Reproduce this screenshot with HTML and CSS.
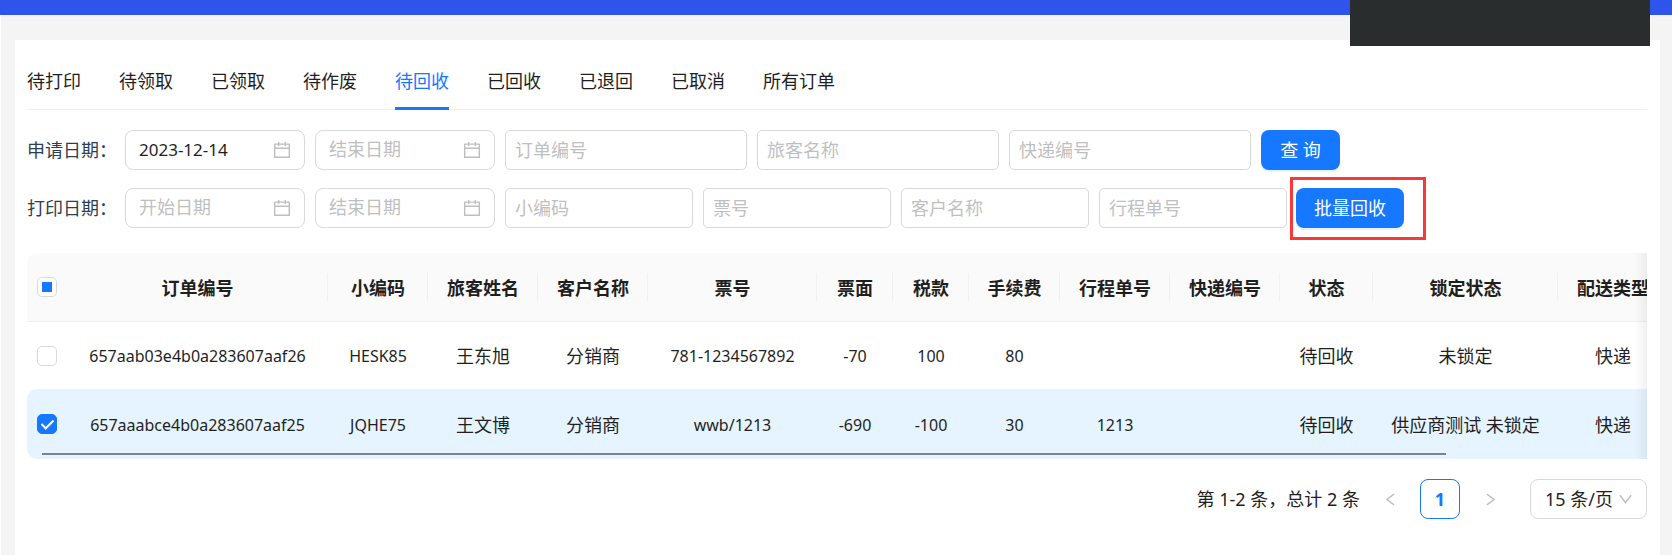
FILE: index.html
```html
<!DOCTYPE html>
<html lang="zh-CN">
<head>
<meta charset="utf-8">
<title>行程单订单</title>
<link rel="stylesheet" href="styles.css">
</head>
<body>
<svg class="sprite" aria-hidden="true">
  <symbol id="calendar" viewBox="64 64 896 896"><path d="M880 184H712v-64c0-4.400-3.600-8-8-8h-56c-4.400 0-8 3.600-8 8v64H384v-64c0-4.400-3.600-8-8-8h-56c-4.400 0-8 3.600-8 8v64H144c-17.700 0-32 14.300-32 32v664c0 17.700 14.300 32 32 32h736c17.700 0 32-14.300 32-32V216c0-17.700-14.300-32-32-32zm-40 656H184V460h656v380zM184 392V256h128v48c0 4.400 3.600 8 8 8h56c4.400 0 8-3.600 8-8v-48h256v48c0 4.400 3.600 8 8 8h56c4.400 0 8-3.600 8-8v-48h128v136H184z"/></symbol>
</svg>
<header class="topbar"><div class="topbar-panel"></div></header>
<main class="page">
  <section class="card">
    <nav class="tabs">
      <a class="tab" href="#">待打印</a>
      <a class="tab" href="#">待领取</a>
      <a class="tab" href="#">已领取</a>
      <a class="tab" href="#">待作废</a>
      <a class="tab tab-active" href="#" aria-current="page">待回收</a>
      <a class="tab" href="#">已回收</a>
      <a class="tab" href="#">已退回</a>
      <a class="tab" href="#">已取消</a>
      <a class="tab" href="#">所有订单</a>
    </nav>
    <form class="filters">
      <div class="filter-row">
        <label class="filter-label" for="apply-start">申请日期：</label>
        <div class="date"><input class="date-input" id="apply-start" type="text" placeholder="开始日期" value="2023-12-14"><svg class="icon"><use href="#calendar"/></svg></div>
        <div class="date"><input class="date-input" type="text" placeholder="结束日期" aria-label="申请结束日期"><svg class="icon"><use href="#calendar"/></svg></div>
        <input class="field field-wide" type="text" placeholder="订单编号" aria-label="订单编号">
        <input class="field field-wide" type="text" placeholder="旅客名称" aria-label="旅客名称">
        <input class="field field-wide" type="text" placeholder="快递编号" aria-label="快递编号">
        <button class="button" type="button">查 询</button>
      </div>
      <div class="filter-row">
        <label class="filter-label" for="print-start">打印日期：</label>
        <div class="date"><input class="date-input" id="print-start" type="text" placeholder="开始日期"><svg class="icon"><use href="#calendar"/></svg></div>
        <div class="date"><input class="date-input" type="text" placeholder="结束日期" aria-label="打印结束日期"><svg class="icon"><use href="#calendar"/></svg></div>
        <input class="field" type="text" placeholder="小编码" aria-label="小编码">
        <input class="field" type="text" placeholder="票号" aria-label="票号">
        <input class="field" type="text" placeholder="客户名称" aria-label="客户名称">
        <input class="field" type="text" placeholder="行程单号" aria-label="行程单号">
        <div class="marked"><button class="button" type="button">批量回收</button></div>
      </div>
    </form>
    <div class="table-box">
      <table class="orders">
        <colgroup>
          <col class="c-check"><col class="c-order"><col class="c-code"><col class="c-name"><col class="c-name"><col class="c-ticket"><col class="c-money"><col class="c-money"><col class="c-fee"><col class="c-name"><col class="c-name"><col class="c-state"><col class="c-lock"><col class="c-name">
        </colgroup>
        <thead>
          <tr>
            <th class="check-cell"><input class="check check-partial" type="checkbox" aria-label="全选"></th>
            <th>订单编号</th><th>小编码</th><th>旅客姓名</th><th>客户名称</th><th>票号</th><th>票面</th><th>税款</th><th>手续费</th><th>行程单号</th><th>快递编号</th><th>状态</th><th>锁定状态</th><th>配送类型</th>
          </tr>
        </thead>
        <tbody>
          <tr>
            <td class="check-cell"><input class="check" type="checkbox" aria-label="选择 HESK85"></td>
            <td class="latin">657aab03e4b0a283607aaf26</td><td class="latin">HESK85</td><td>王东旭</td><td>分销商</td><td class="latin">781-1234567892</td><td class="latin">-70</td><td class="latin">100</td><td class="latin">80</td><td></td><td></td><td>待回收</td><td>未锁定</td><td>快递</td>
          </tr>
          <tr class="selected">
            <td class="check-cell"><input class="check" type="checkbox" checked aria-label="选择 JQHE75"></td>
            <td class="latin">657aaabce4b0a283607aaf25</td><td class="latin">JQHE75</td><td>王文博</td><td>分销商</td><td class="latin">wwb/1213</td><td class="latin">-690</td><td class="latin">-100</td><td class="latin">30</td><td class="latin">1213</td><td></td><td>待回收</td><td>供应商测试 未锁定</td><td>快递</td>
          </tr>
        </tbody>
      </table>
      <div class="scroll-thumb"></div>
    </div>
    <footer class="pager">
      <span class="total">第 1-2 条，总计 2 条</span>
      <button class="page-button" type="button" disabled aria-label="上一页"><svg class="arrow" viewBox="0 0 10 14"><path d="M9 1 1 7l8 6"/></svg></button>
      <button class="page-button page-current" type="button">1</button>
      <button class="page-button" type="button" disabled aria-label="下一页"><svg class="arrow" viewBox="0 0 10 14"><path d="m1 1 8 6-8 6"/></svg></button>
      <div class="size"><select class="size-select" aria-label="每页条数"><option>15 条/页</option></select><svg class="size-arrow" viewBox="0 0 14 10"><path d="m1 1 6 8 6-8"/></svg></div>
    </footer>
  </section>
</main>
</body>
</html>
```
FILE: styles.css
```css
*, *::before, *::after { box-sizing: border-box; }
body {
  margin: 0;
  min-height: 100vh;
  display: flex;
  flex-direction: column;
  background: #f4f4f4;
  color: #1f1f1f;
  font: 18px/28px "Noto Sans", "Noto Sans CJK SC", sans-serif;
}
input, button, select { font: inherit; color: inherit; margin: 0; }
.sprite { position: absolute; width: 0; height: 0; }

.topbar { position: relative; height: 15px; background: #2f54eb; }
.topbar-panel {
  position: absolute;
  top: 0;
  right: 22px;
  width: 300px;
  height: 46px;
  background: #292d2e;
}
.page {
  flex: 1;
  display: flex;
  flex-direction: column;
  padding: 25px 12px 0 14px;
  border-left: 1px solid #fff;
}
.card { flex: 1; background: #fff; padding: 12px 13px 0 12px; overflow: hidden; }

.tabs { display: flex; gap: 38px; height: 58px; border-bottom: 1px solid #f0f0f0; }
.tab {
  height: 58px;
  padding-top: 15px;
  color: inherit;
  text-decoration: none;
  white-space: nowrap;
}
.tab-active { color: #1677ff; border-bottom: 3px solid #1677ff; }

.filters { display: flex; flex-direction: column; gap: 18px; padding-top: 20px; }
.filter-row { display: flex; gap: 10px; height: 40px; }
.filter-label { width: 88px; line-height: 40px; white-space: nowrap; color: #2c3e50; }
.date {
  display: flex;
  align-items: center;
  width: 180px;
  padding: 0 13px;
  border: 1px solid #d9d9d9;
  border-radius: 8px;
}
.date-input {
  flex: 1;
  min-width: 0;
  padding: 0;
  border: 0;
  outline: 0;
  background: none;
  font-size: 17px;
}
.date-input::placeholder { font-size: 18px; }
.icon { width: 18px; height: 18px; fill: #bfbfbf; }
.field {
  width: 188px;
  padding: 0 9px;
  border: 1px solid #d9d9d9;
  border-radius: 5px;
  outline: 0;
}
.field-wide { width: 242px; }
::placeholder { color: #bfbfbf; opacity: 1; }
.button {
  min-width: 79px;
  height: 40px;
  padding: 0 18px;
  border: 0;
  border-radius: 8px;
  background: #1677ff;
  color: #fff;
  box-shadow: 0 2px 0 rgba(5, 145, 255, 0.1);
  white-space: nowrap;
}
.marked {
  height: 63px;
  margin: -11px 0 0 -7px;
  padding: 8px 19px 0 3px;
  border: 3px solid #fb3838;
}

.table-box {
  position: relative;
  margin-top: 25px;
  overflow: hidden;
  border-radius: 10px 0 0 10px;
}
.table-box::after {
  content: "";
  position: absolute;
  inset: 0 0 0 auto;
  width: 12px;
  background: linear-gradient(to right, rgba(5, 5, 5, 0), rgba(5, 5, 5, 0.06));
}
.orders { width: 1641px; table-layout: fixed; border-collapse: separate; border-spacing: 0; }
.c-check { width: 40px; }
.c-order { width: 261px; }
.c-code { width: 100px; }
.c-name { width: 110px; }
.c-ticket { width: 169px; }
.c-money { width: 76px; }
.c-fee { width: 91px; }
.c-state { width: 93px; }
.c-lock { width: 185px; }
.orders th, .orders td { height: 67px; padding: 0; text-align: center; white-space: nowrap; }
.orders th {
  position: relative;
  height: 69px;
  padding-top: 2px;
  background: #fafafa;
  border-bottom: 1px solid #f0f0f0;
  font-weight: 700;
}
.orders th + th::after {
  content: "";
  position: absolute;
  top: 20px;
  right: 0;
  width: 1px;
  height: 28px;
  background: #f0f0f0;
}
.orders .latin { font-size: 16px; }
.orders td { padding-top: 1px; }
.orders .check-cell { padding: 0; }
.orders .selected td { height: 70px; background: #e6f4ff; }
.orders .selected td:first-child { border-radius: 10px 0 0 10px; }
.check {
  appearance: none;
  position: relative;
  display: block;
  width: 20px;
  height: 20px;
  margin: 0 auto;
  border: 1px solid #d9d9d9;
  border-radius: 5px;
  background: #fff;
}
.check-partial::after {
  content: "";
  position: absolute;
  inset: 4px;
  background: #1677ff;
}
.check:checked { border-color: #1677ff; background: #1677ff; }
.check:checked::after {
  content: "";
  position: absolute;
  left: 6px;
  top: 2px;
  width: 7px;
  height: 12px;
  border: solid #fff;
  border-width: 0 2px 2px 0;
  transform: rotate(45deg);
}
.scroll-thumb {
  position: absolute;
  left: 15px;
  right: 201px;
  bottom: 4px;
  height: 2px;
  background: #808285;
}

.pager { display: flex; justify-content: flex-end; align-items: center; gap: 10px; padding-top: 20px; }
.page-button {
  width: 40px;
  height: 40px;
  padding: 0;
  border: 0;
  border-radius: 8px;
  background: none;
}
.page-current { border: 1px solid #1677ff; color: #1677ff; font-weight: 700; }
.arrow { display: block; width: 9px; height: 13px; margin: 0 auto; }
.arrow path, .size-arrow path { fill: none; stroke: #bfbfbf; stroke-width: 1.500; }
.size { position: relative; width: 117px; margin-left: 10px; }
.size-select {
  appearance: none;
  display: block;
  width: 100%;
  height: 40px;
  padding: 0 14px;
  border: 1px solid #d9d9d9;
  border-radius: 8px;
  background: #fff;
}
.size-arrow { position: absolute; right: 15px; top: 15px; width: 13px; height: 10px; pointer-events: none; }
```
